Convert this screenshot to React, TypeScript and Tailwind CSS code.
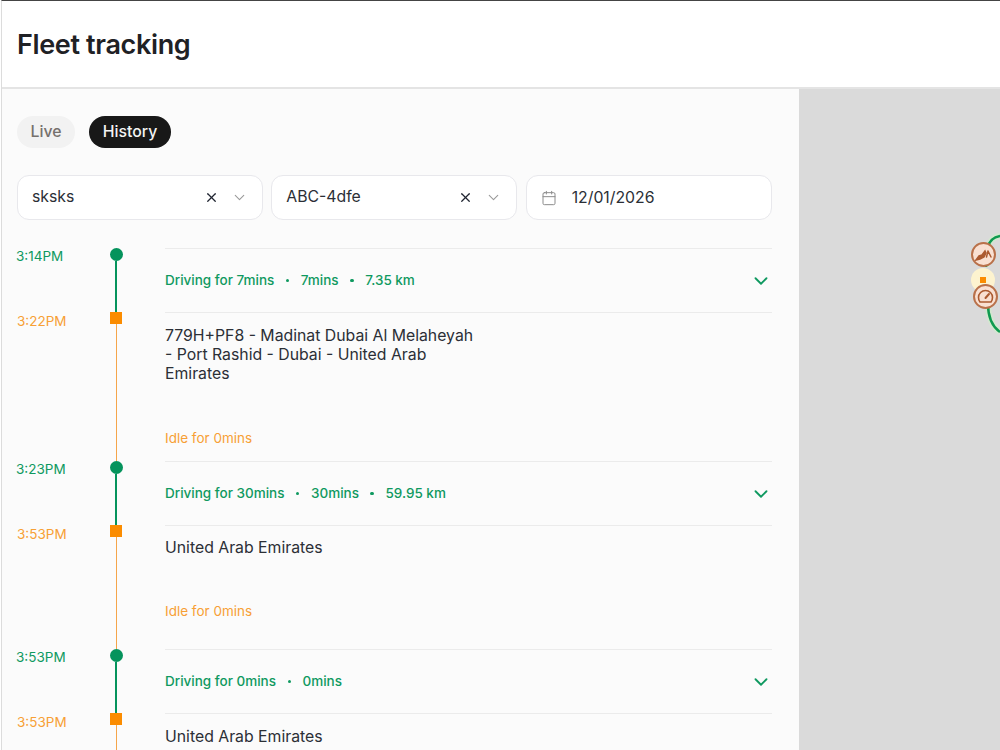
import { X, ChevronDown, Calendar } from "lucide-react";

function Select({ value }: { value: string }) {
  return (
    <div className="flex h-[45px] w-[245.67px] items-center rounded-xl border border-[#e8e8ec] bg-white pl-[14px] pr-[14px]">
      <span className="flex-1 pb-[2px] text-[15.8px] text-[#2b2f36]">{value}</span>
      <X size={15} strokeWidth={2} className="mr-[12px] text-[#1f2430]" />
      <ChevronDown size={17} strokeWidth={1.5} className="text-[#9a9a9a]" />
    </div>
  );
}

function Entry({
  start,
  end,
  parts,
  address,
  idle,
  stopHeight,
  addressPad,
  idleGap,
}: {
  start: string;
  end: string;
  parts: string[];
  address: string[];
  idle?: string;
  stopHeight: string;
  addressPad: string;
  idleGap?: string;
}) {
  return (
    <div className="flex flex-col">
      <div className="flex h-[64px]">
        <div className="w-[107px] pl-[14px] text-[13.5px] leading-[17px] text-[#0f9960]">{start}</div>
        <div className="flex w-[14px] flex-col items-center">
          <div className="h-[13px] w-[13px] shrink-0 rounded-full bg-[#05935c]" />
          <div className="w-[2px] flex-1 bg-[#05935c]" />
        </div>
        <div className="ml-[42px] flex w-[607px] items-center border-t border-[#ebebeb]">
          <div className="flex flex-1 items-center text-[13.5px] font-medium text-[#0f9960]">
            {parts.map((p, i) => (
              <span key={p} className="flex items-center">
                {i > 0 && <span className="mx-[11.5px] h-[3.5px] w-[3.5px] rounded-full bg-[#0f9960]" />}
                {p}
              </span>
            ))}
          </div>
          <ChevronDown size={22} strokeWidth={2} className="text-[#0f9960]" />
        </div>
      </div>
      <div className={`flex ${stopHeight}`}>
        <div className="w-[107px] pl-[15px] pt-[1px] text-[13.5px] leading-[17px] text-[#f7a035]">{end}</div>
        <div className="flex w-[14px] flex-col">
          <div className="mx-auto h-[12px] w-[12px] shrink-0 bg-[#fb8c00]" />
          <div className="ml-[7px] w-px flex-1 bg-[#f5a54a]" />
        </div>
        <div className={`ml-[42px] flex w-[607px] flex-col border-t border-[#ebebeb] ${addressPad}`}>
          <div className="text-[15.8px] leading-[19px] text-[#2b2f36]">
            {address.map((line) => (
              <div key={line}>{line}</div>
            ))}
          </div>
          {idle && <div className={`${idleGap} text-[13.5px] leading-[17px] text-[#f7a035]`}>{idle}</div>}
        </div>
      </div>
    </div>
  );
}

export default function App() {
  return (
    <div className="h-[750px] w-[1000px] overflow-hidden bg-white pl-px" style={{ fontFamily: "Inter, sans-serif" }}>
      <div className="flex h-full flex-col border-t border-l border-t-[#444] border-l-[#dcdcdc]">
        <header className="flex h-[88px] shrink-0 items-center border-b-2 border-[#e4e4e4] pl-[15px]">
          <h1 className="text-[27px] font-semibold leading-none tracking-[-0.35px] text-[#1f2125]">Fleet tracking</h1>
        </header>
        <div className="flex min-h-0 flex-1">
          <div className="w-[797px] shrink-0 overflow-hidden bg-[#fbfbfb]">
            <div className="flex gap-[14px] pl-[15px] pt-[27px]">
              <div className="flex h-[32px] w-[58px] items-center justify-center rounded-full bg-[#f2f2f2] pb-[1px] text-[15.8px] font-medium text-[#76716d]">Live</div>
              <div className="flex h-[32px] w-[82px] items-center justify-center rounded-full bg-[#181818] pb-[1px] text-[15.8px] font-medium text-[#f3f3f3]">History</div>
            </div>
            <div className="ml-[15px] flex w-[755px] gap-[8.67px] pt-[27px]">
              <Select value="sksks" />
              <Select value="ABC-4dfe" />
              <div className="flex h-[45px] w-[246px] items-center rounded-xl border border-[#e8e8ec] bg-white pl-[14px]">
                <Calendar size={16} strokeWidth={1.5} className="mr-[15px] text-[#8c8c8c]" />
                <span className="text-[15.8px] text-[#2b2f36]">12/01/2026</span>
              </div>
            </div>
            <div className="pt-[28px]">
              <Entry
                start="3:14PM"
                end="3:22PM"
                parts={["Driving for 7mins", "7mins", "7.35 km"]}
                address={["779H+PF8 - Madinat Dubai Al Melaheyah", "- Port Rashid - Dubai - United Arab", "Emirates"]}
                idle="Idle for 0mins"
                idleGap="mt-[47px]"
                stopHeight="h-[149px]"
                addressPad="pt-[13px]"
              />
              <Entry
                start="3:23PM"
                end="3:53PM"
                parts={["Driving for 30mins", "30mins", "59.95 km"]}
                address={["United Arab Emirates"]}
                idle="Idle for 0mins"
                idleGap="mt-[46px]"
                stopHeight="h-[124px]"
                addressPad="pt-[12px]"
              />
              <Entry
                start="3:53PM"
                end="3:53PM"
                parts={["Driving for 0mins", "0mins"]}
                address={["United Arab Emirates"]}
                stopHeight="h-[125px]"
                addressPad="pt-[13px]"
              />
            </div>
          </div>
          <div className="relative flex-1 overflow-hidden bg-[#dadada]">
            <svg className="absolute left-[160px] top-[130px]" width="42" height="130" viewBox="0 0 42 130" fill="none">
              <path d="M41 17 C34 18 30 23 29 28 M27 42 L27 48 M29 85 C29 98 34 108 41 113" stroke="#d3e8cf" strokeWidth="6" />
              <path d="M41 17 C34 18 30 23 29 28 M27 42 L27 48 M29 85 C29 98 34 108 41 113" stroke="#0f9a50" strokeWidth="2.5" />
            </svg>
            <div className="absolute left-[172px] top-[179px] h-[24px] w-[24px] rounded-full bg-[#fdf3cf]" />
            <div className="absolute left-[181px] top-[188px] h-[6px] w-[6px] bg-[#fb8c00]" />
            <div className="absolute left-[172px] top-[153px] flex h-[25px] w-[25px] items-center justify-center rounded-full border-2 border-[#b9714a] bg-[#f9e0d2]">
              <svg width="17" height="13" viewBox="0 0 17 13" fill="none" stroke="#ab5a30" strokeWidth="1.5" strokeLinecap="round">
                <path d="M1 12 L4 8 L7 7 L10 3 L11 5 L9 9 L5 11 Z" fill="#ab5a30" />
                <path d="M13 3 L11.5 9 M13 3 L16 9" />
              </svg>
            </div>
            <div className="absolute left-[174px] top-[195px] flex h-[25px] w-[25px] items-center justify-center rounded-full border-2 border-[#b9714a] bg-[#f9e0d2]">
              <svg width="17" height="15" viewBox="0 0 17 15" fill="none" stroke="#ab5a30" strokeWidth="1.6" strokeLinecap="round" strokeLinejoin="round">
                <path d="M3 13 Q1.5 11 1.5 8.5 A7 7 0 0 1 15.5 8.5 Q15.5 11 14 13 Z" />
                <path d="M8.5 9 L12 5" strokeWidth="2" />
              </svg>
            </div>
          </div>
        </div>
      </div>
    </div>
  );
}
